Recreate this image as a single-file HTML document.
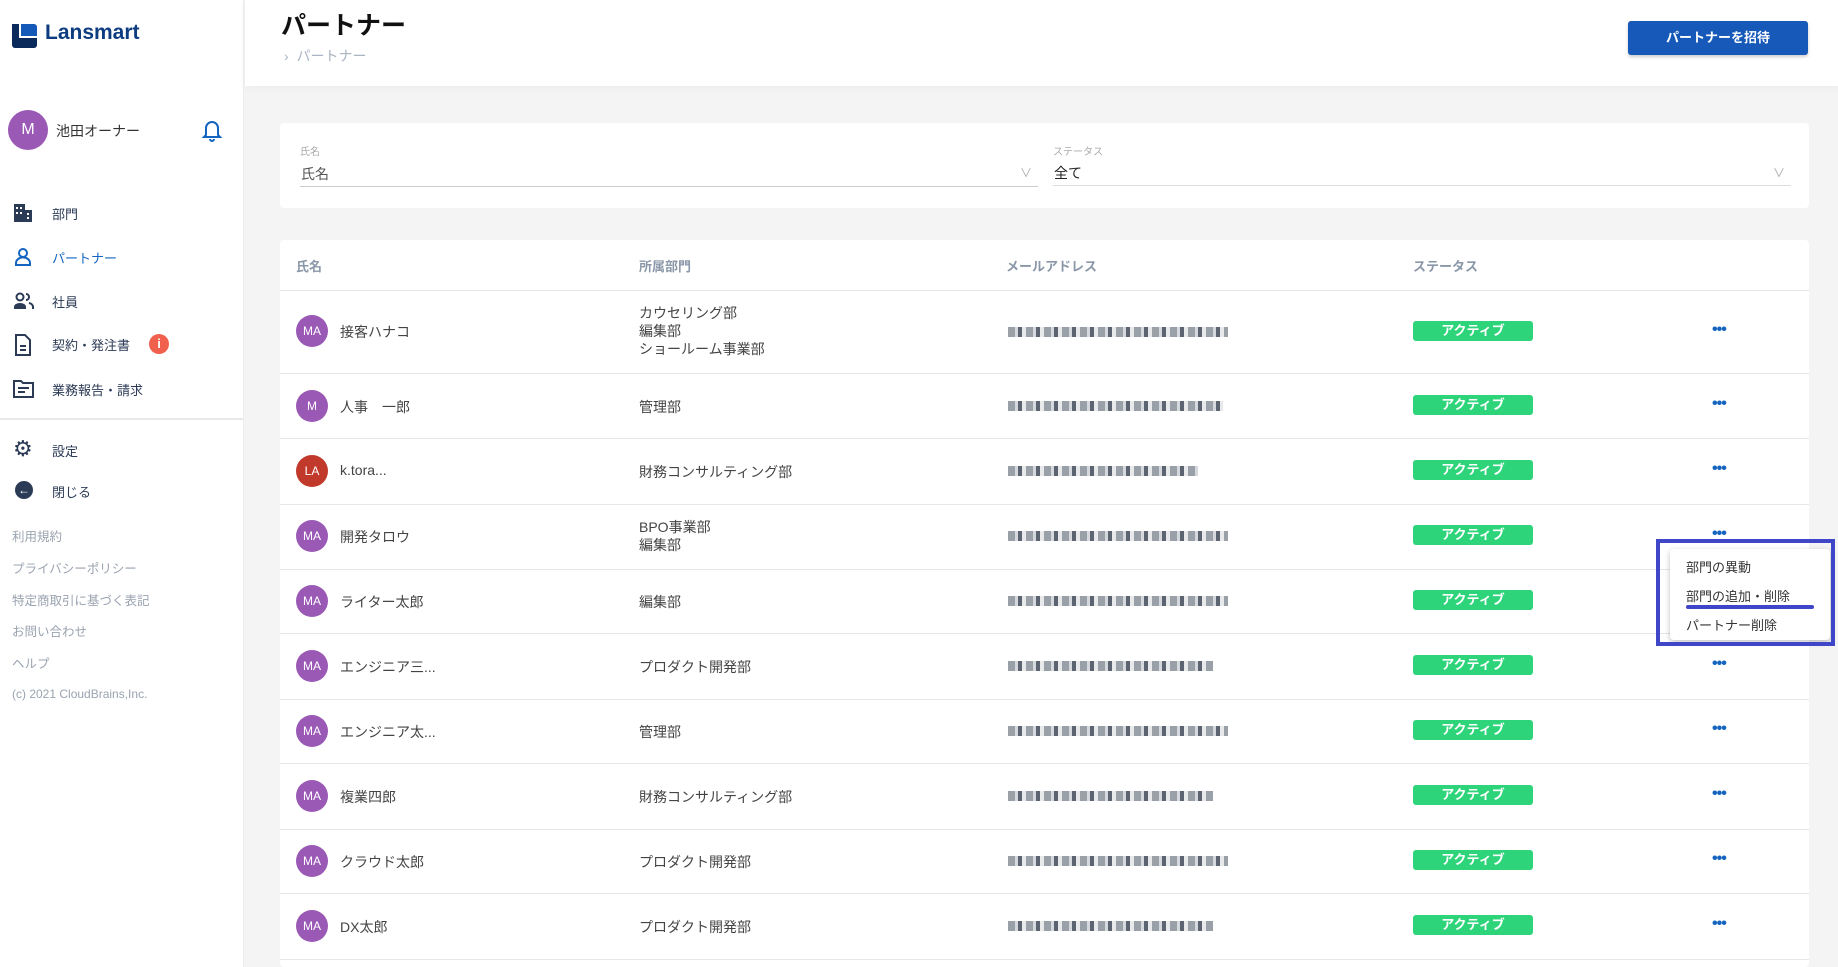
<!DOCTYPE html>
<html><head><meta charset="utf-8"><style>
*{margin:0;padding:0;box-sizing:border-box}
body{width:1838px;height:967px;overflow:hidden;background:#f4f4f4;font-family:"Liberation Sans","Noto Sans CJK JP",sans-serif;color:#333;position:relative}
.a{position:absolute}
.side{left:0;top:0;width:244px;height:967px;background:#fff;border-right:1px solid #eee}
.nav{left:52px;font-size:13px;color:#2b3a55}
.ic{left:13px}
.lnk{left:12px;font-size:12.5px;color:#9aa3b0}
.av{width:32px;height:32px;border-radius:50%;background:#9b59b6;color:#fff;font-size:12px;display:flex;align-items:center;justify-content:center}
.row{left:280px;width:1529px;border-top:1px solid #e6e6e6}
.txt{font-size:14px;color:#444}
.badge{width:120px;height:20px;background:#2ed47a;border-radius:3px;color:#fff;font-size:13px;font-weight:bold;text-align:center;line-height:20px}
.dots{font-size:16px;color:#1565c0;font-weight:bold;letter-spacing:-1px}
.em{height:10px;width:220px;background:repeating-linear-gradient(90deg,#9aa0a8 0 7px,#d5d8dc 7px 10px,#5b6470 10px 14px,#e8e9eb 14px 18px)}
</style></head><body>
<div class="a side"></div>
<!-- logo -->
<div class="a" style="left:12px;top:24px;width:25px;height:24px;background:#0b2a5c;border-radius:3px"></div>
<div class="a" style="left:18px;top:24px;width:19px;height:14px;background:#fff"></div>
<div class="a" style="left:21px;top:24px;width:16px;height:12px;background:#1459b8;border-radius:0 3px 0 0"></div>
<div class="a" style="left:12px;top:24px;width:7px;height:18px;background:#0b2a5c"></div>
<div class="a" style="left:45px;top:21px;font-size:21px;font-weight:bold;color:#0d3c80">Lansmart</div>
<!-- user -->
<div class="a av" style="left:8px;top:110px;width:40px;height:40px;font-size:16px">M</div>
<div class="a" style="left:56px;top:121px;font-size:14px;color:#333">池田オーナー</div>
<svg class="a" style="left:200px;top:117px" width="24" height="26" viewBox="0 0 24 26"><path d="M6 18V11a6 6 0 0 1 12 0v7l2 2H4z" fill="none" stroke="#1565c0" stroke-width="2"/><path d="M10 22a2 2 0 0 0 4 0" fill="none" stroke="#1565c0" stroke-width="2"/></svg>
<!-- nav -->
<svg class="a ic" style="top:203px" width="20" height="20"><rect x="1" y="1" width="11" height="18" fill="#2b3a55"/><rect x="12" y="7" width="7" height="12" fill="#2b3a55"/><g fill="#fff"><rect x="3" y="4" width="2" height="2"/><rect x="7" y="4" width="2" height="2"/><rect x="3" y="9" width="2" height="2"/><rect x="7" y="9" width="2" height="2"/><rect x="14" y="10" width="2" height="2"/><rect x="14" y="14" width="2" height="2"/></g></svg>
<div class="a nav" style="top:204px">部門</div>
<svg class="a ic" style="top:247px" width="20" height="20"><circle cx="10" cy="6" r="4" fill="none" stroke="#1565c0" stroke-width="2"/><path d="M3 18v-2a5 4 0 0 1 14 0v2z" fill="none" stroke="#1565c0" stroke-width="2"/></svg>
<div class="a nav" style="top:248px;color:#1565c0">パートナー</div>
<svg class="a ic" style="top:291px" width="22" height="20"><circle cx="7" cy="6" r="3.5" fill="none" stroke="#2b3a55" stroke-width="2"/><path d="M1 18v-2a6 4 0 0 1 12 0v2z" fill="#2b3a55"/><path d="M13 3a3 3 0 0 1 0 6M16 12a5 4 0 0 1 4 4v2" fill="none" stroke="#2b3a55" stroke-width="2"/></svg>
<div class="a nav" style="top:292px">社員</div>
<svg class="a ic" style="top:334px" width="20" height="22"><path d="M3 1h9l5 5v15H3z" fill="none" stroke="#2b3a55" stroke-width="2"/><path d="M7 12h6M7 16h6" stroke="#2b3a55" stroke-width="2"/></svg>
<div class="a nav" style="top:335px">契約・発注書</div>
<div class="a" style="left:149px;top:334px;width:20px;height:20px;border-radius:50%;background:#f0604d;color:#fff;font-size:13px;font-weight:bold;text-align:center;line-height:20px">i</div>
<svg class="a ic" style="top:379px" width="22" height="20"><path d="M1 2h7l2 2h10v14H1z" fill="none" stroke="#2b3a55" stroke-width="2"/><path d="M5 9h11M5 13h7" stroke="#2b3a55" stroke-width="2"/></svg>
<div class="a nav" style="top:380px">業務報告・請求</div>
<div class="a" style="left:0;top:418px;width:244px;height:2px;background:#e8e8e8"></div>
<div class="a ic" style="top:436px;font-size:22px;color:#2b3a55">⚙</div>
<div class="a nav" style="top:441px">設定</div>
<div class="a" style="left:15px;top:481px;width:18px;height:18px;border-radius:50%;background:#2b3a55;color:#fff;font-size:12px;text-align:center;line-height:18px">←</div>
<div class="a nav" style="top:482px">閉じる</div>
<div class="a lnk" style="top:526px">利用規約</div>
<div class="a lnk" style="top:558px">プライバシーポリシー</div>
<div class="a lnk" style="top:590px">特定商取引に基づく表記</div>
<div class="a lnk" style="top:621px">お問い合わせ</div>
<div class="a lnk" style="top:653px">ヘルプ</div>
<div class="a lnk" style="top:687px;font-size:12px">(c) 2021 CloudBrains,Inc.</div>
<!-- header -->
<div class="a" style="left:245px;top:0;width:1593px;height:86px;background:#fff;box-shadow:0 2px 8px rgba(0,0,0,.04)"></div>
<div class="a" style="left:281px;top:6px;font-size:25px;color:#111;font-weight:bold">パートナー</div>
<div class="a" style="left:284px;top:46px;font-size:14px;color:#aab4c2">›&nbsp;&nbsp;パートナー</div>
<div class="a" style="left:1628px;top:21px;width:180px;height:34px;background:#1659b8;border-radius:3px;color:#fff;font-size:13px;font-weight:bold;text-align:center;line-height:34px;box-shadow:0 2px 3px rgba(0,0,0,.2)">パートナーを招待</div>
<!-- filter -->
<div class="a" style="left:280px;top:123px;width:1529px;height:85px;background:#fff;border-radius:4px"></div>
<div class="a" style="left:300px;top:143px;font-size:10px;color:#aaa">氏名</div>
<div class="a" style="left:301px;top:164px;font-size:14px;color:#555">氏名</div>
<div class="a" style="left:1020px;top:164px;font-size:12px;color:#aaa">∨</div>
<div class="a" style="left:300px;top:186px;width:738px;height:1px;background:#ccc"></div>
<div class="a" style="left:1053px;top:143px;font-size:10px;color:#aaa">ステータス</div>
<div class="a" style="left:1054px;top:163px;font-size:14px;color:#222">全て</div>
<div class="a" style="left:1773px;top:164px;font-size:12px;color:#aaa">∨</div>
<div class="a" style="left:1053px;top:185px;width:738px;height:1px;background:#ddd"></div>
<!-- table -->
<div class="a" style="left:280px;top:240px;width:1529px;height:727px;background:#fff;border-radius:4px"></div>
<div class="a" style="left:296px;top:256px;font-size:13px;color:#8a97a8;font-weight:bold">氏名</div>
<div class="a" style="left:639px;top:256px;font-size:13px;color:#8a97a8;font-weight:bold">所属部門</div>
<div class="a" style="left:1006px;top:256px;font-size:13px;color:#8a97a8;font-weight:bold">メールアドレス</div>
<div class="a" style="left:1413px;top:256px;font-size:13px;color:#8a97a8;font-weight:bold">ステータス</div>

<div class="a row" style="top:290px"></div>
<div class="a av" style="left:296px;top:315px">MA</div><div class="a txt" style="left:340px;top:322px">接客ハナコ</div>
<div class="a txt" style="left:639px;top:304px;line-height:18px">カウセリング部<br>編集部<br>ショールーム事業部</div>
<div class="a em" style="left:1008px;top:327px"></div><div class="a badge" style="left:1413px;top:321px">アクティブ</div><div class="a dots" style="left:1712px;top:321px">•••</div>

<div class="a row" style="top:373px"></div>
<div class="a av" style="left:296px;top:390px">M</div><div class="a txt" style="left:340px;top:397px">人事　一郎</div>
<div class="a txt" style="left:639px;top:397px">管理部</div>
<div class="a em" style="left:1008px;top:401px;width:215px"></div><div class="a badge" style="left:1413px;top:395px">アクティブ</div><div class="a dots" style="left:1712px;top:395px">•••</div>

<div class="a row" style="top:438px"></div>
<div class="a av" style="left:296px;top:455px;background:#c0392b">LA</div><div class="a txt" style="left:340px;top:462px">k.tora...</div>
<div class="a txt" style="left:639px;top:462px">財務コンサルティング部</div>
<div class="a em" style="left:1008px;top:466px;width:190px"></div><div class="a badge" style="left:1413px;top:460px">アクティブ</div><div class="a dots" style="left:1712px;top:460px">•••</div>

<div class="a row" style="top:504px"></div>
<div class="a av" style="left:296px;top:520px">MA</div><div class="a txt" style="left:340px;top:527px">開発タロウ</div>
<div class="a txt" style="left:639px;top:518px;line-height:18px">BPO事業部<br>編集部</div>
<div class="a em" style="left:1008px;top:531px"></div><div class="a badge" style="left:1413px;top:525px">アクティブ</div><div class="a dots" style="left:1712px;top:525px">•••</div>

<div class="a row" style="top:569px"></div>
<div class="a av" style="left:296px;top:585px">MA</div><div class="a txt" style="left:340px;top:592px">ライター太郎</div>
<div class="a txt" style="left:639px;top:592px">編集部</div>
<div class="a em" style="left:1008px;top:596px"></div><div class="a badge" style="left:1413px;top:590px">アクティブ</div>

<div class="a row" style="top:633px"></div>
<div class="a av" style="left:296px;top:650px">MA</div><div class="a txt" style="left:340px;top:657px">エンジニア三...</div>
<div class="a txt" style="left:639px;top:657px">プロダクト開発部</div>
<div class="a em" style="left:1008px;top:661px;width:205px"></div><div class="a badge" style="left:1413px;top:655px">アクティブ</div><div class="a dots" style="left:1712px;top:655px">•••</div>

<div class="a row" style="top:699px"></div>
<div class="a av" style="left:296px;top:715px">MA</div><div class="a txt" style="left:340px;top:722px">エンジニア太...</div>
<div class="a txt" style="left:639px;top:722px">管理部</div>
<div class="a em" style="left:1008px;top:726px"></div><div class="a badge" style="left:1413px;top:720px">アクティブ</div><div class="a dots" style="left:1712px;top:720px">•••</div>

<div class="a row" style="top:763px"></div>
<div class="a av" style="left:296px;top:780px">MA</div><div class="a txt" style="left:340px;top:787px">複業四郎</div>
<div class="a txt" style="left:639px;top:787px">財務コンサルティング部</div>
<div class="a em" style="left:1008px;top:791px;width:205px"></div><div class="a badge" style="left:1413px;top:785px">アクティブ</div><div class="a dots" style="left:1712px;top:785px">•••</div>

<div class="a row" style="top:829px"></div>
<div class="a av" style="left:296px;top:845px">MA</div><div class="a txt" style="left:340px;top:852px">クラウド太郎</div>
<div class="a txt" style="left:639px;top:852px">プロダクト開発部</div>
<div class="a em" style="left:1008px;top:856px"></div><div class="a badge" style="left:1413px;top:850px">アクティブ</div><div class="a dots" style="left:1712px;top:850px">•••</div>

<div class="a row" style="top:893px"></div>
<div class="a av" style="left:296px;top:910px">MA</div><div class="a txt" style="left:340px;top:917px">DX太郎</div>
<div class="a txt" style="left:639px;top:917px">プロダクト開発部</div>
<div class="a em" style="left:1008px;top:921px;width:205px"></div><div class="a badge" style="left:1413px;top:915px">アクティブ</div><div class="a dots" style="left:1712px;top:915px">•••</div>
<div class="a row" style="top:959px"></div>

<!-- popup -->
<div class="a" style="left:1670px;top:549px;width:160px;height:91px;background:#fff;border-radius:4px;box-shadow:0 2px 6px rgba(0,0,0,.25)"></div>
<div class="a" style="left:1686px;top:557px;font-size:13px;color:#333">部門の異動</div>
<div class="a" style="left:1686px;top:586px;font-size:13px;color:#333">部門の追加・削除</div>
<div class="a" style="left:1686px;top:605px;width:128px;height:4px;background:#4046c8;border-radius:2px"></div>
<div class="a" style="left:1686px;top:615px;font-size:13px;color:#333">パートナー削除</div>
<div class="a" style="left:1656px;top:539px;width:179px;height:107px;border:4px solid #4046c8"></div>
</body></html>
